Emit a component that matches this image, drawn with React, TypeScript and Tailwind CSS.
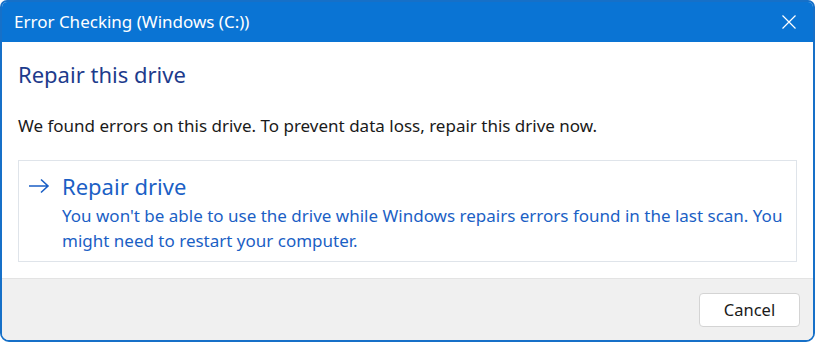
const font = { fontFamily: '"Noto Sans", "Open Sans", sans-serif' };

const CloseIcon = () => (
  <svg width="16" height="16" viewBox="0 0 16 16" fill="none">
    <path d="M1.5 1.5 L14.5 14.5 M14.5 1.5 L1.5 14.5" stroke="white" strokeWidth="1.2" />
  </svg>
);

const ArrowIcon = () => (
  <svg width="22" height="16" viewBox="0 0 22 16" fill="none">
    <path d="M1 8 H20 M13 1.5 L20 8 L13 14.5" stroke="#1b5fc5" strokeWidth="1.6" />
  </svg>
);

export default function App() {
  return (
    <div className="w-[817px] h-[343px] bg-white" style={font}>
      <div className="w-[815px] h-[342px] flex flex-col border-2 border-[#1670c8] rounded-t-[7px] rounded-b-[9px] overflow-hidden">
        <div className="h-[40px] shrink-0 bg-[#0a74d4] flex items-center justify-between pl-[12px] pr-[16px]">
          <span className="text-white text-[17px]">Error Checking (Windows (C:))</span>
          <CloseIcon />
        </div>

        <div className="flex-1 bg-white px-[16px] pt-[18px]">
          <h1 className="text-[22px] leading-[28px] text-[#1d3b8c]">Repair this drive</h1>
          <p className="mt-[28px] text-[17px] leading-[20px] text-[#1a1a1a]">
            We found errors on this drive. To prevent data loss, repair this drive now.
          </p>
          <div className="mt-[24px] h-[102px] border border-[#dfe4ea] pl-[9px] pt-[11px] flex gap-[12px]">
            <div className="h-[28px] flex items-center">
              <ArrowIcon />
            </div>
            <div className="text-[#1b5fc5]">
              <div className="text-[22px] leading-[28px]">Repair drive</div>
              <p className="mt-[3px] text-[17px] leading-[25px] pr-[12px]">
                You won't be able to use the drive while Windows repairs errors found in the last scan. You might need to restart your computer.
              </p>
            </div>
          </div>
        </div>

        <div className="h-[62px] shrink-0 bg-[#f0f0f0] border-t border-[#e3e3e3] flex justify-end items-start pt-[14px] pr-[13px]">
          <button className="w-[101px] h-[34px] bg-white border border-[#d4d4d4] rounded-[4px] text-[16.5px] text-[#1a1a1a]">
            Cancel
          </button>
        </div>
      </div>
    </div>
  );
}
